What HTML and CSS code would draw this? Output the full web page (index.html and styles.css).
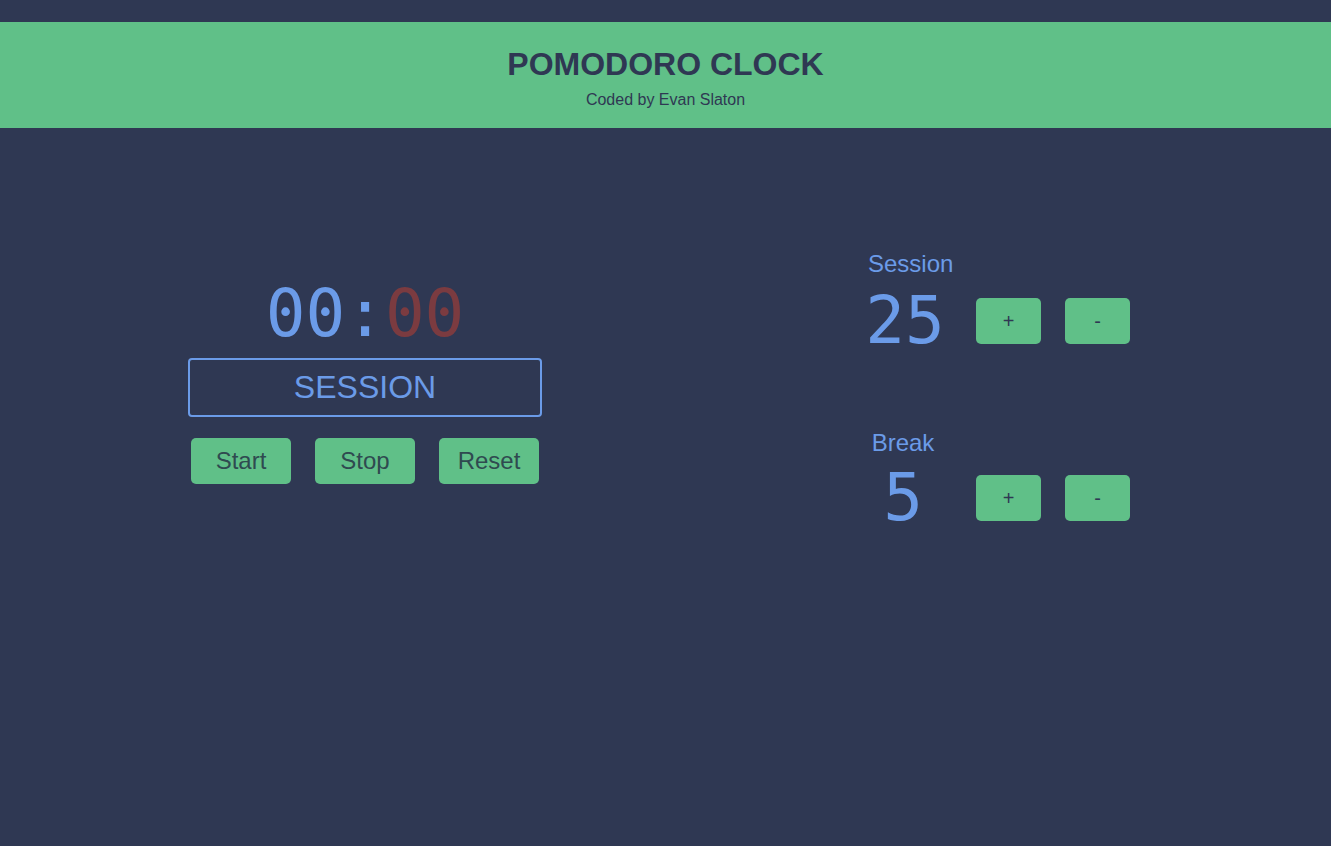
FILE: index.html
```html
<!DOCTYPE html>
<html lang="en">
<head>
<meta charset="utf-8">
<title>Pomodoro Clock</title>
<link rel="stylesheet" href="styles.css">
</head>
<body>
<header class="header">
  <h1 class="title">POMODORO CLOCK</h1>
  <p class="subtitle">Coded by Evan Slaton</p>
</header>
<main class="main">
  <section class="clock">
    <div class="time"><span class="mins">00</span>:<span class="secs">00</span></div>
    <div class="mode">SESSION</div>
    <div class="controls">
      <button class="btn">Start</button>
      <button class="btn">Stop</button>
      <button class="btn">Reset</button>
    </div>
  </section>
  <section class="settings">
    <div class="group">
      <div class="label label-session">Session</div>
      <div class="row">
        <div class="num">25</div>
        <button class="adj">+</button>
        <button class="adj">-</button>
      </div>
    </div>
    <div class="group group-break">
      <div class="label label-break">Break</div>
      <div class="row">
        <div class="num">5</div>
        <button class="adj">+</button>
        <button class="adj">-</button>
      </div>
    </div>
  </section>
</main>
</body>
</html>
```

FILE: styles.css
```css
html, body {
  margin: 0;
  padding: 0;
}
body {
  background: #2f3853;
  font-family: "Liberation Sans", Arial, sans-serif;
  color: #2f3853;
  min-height: 846px;
}
.header {
  margin-top: 22px;
  background: #60c088;
  padding: 24px 0 18px;
  text-align: center;
}
.title {
  margin: 0;
  font-size: 32px;
  line-height: 36px;
  font-weight: bold;
  color: #2f3853;
}
.subtitle {
  margin: 8px 0 0;
  font-size: 16px;
  line-height: 20px;
  color: #2f3853;
}
.main {
  display: flex;
  align-items: flex-start;
}
.clock {
  margin-left: 188px;
  margin-top: 151px;
  width: 354px;
  display: flex;
  flex-direction: column;
  align-items: stretch;
}
.time {
  font-family: "DejaVu Sans Mono", monospace;
  font-size: 66px;
  line-height: 70px;
  text-align: center;
  color: #6b9be8;
}
.secs {
  color: #7b3b40;
}
.mode {
  margin-top: 9px;
  height: 59px;
  box-sizing: border-box;
  border: 2px solid #6b9be8;
  border-radius: 4px;
  font-size: 32px;
  line-height: 55px;
  text-align: center;
  color: #6b9be8;
}
.controls {
  margin-top: 21px;
  display: flex;
  justify-content: center;
  gap: 24px;
}
.btn {
  width: 100px;
  height: 46px;
  border: none;
  border-radius: 5px;
  background: #60c088;
  color: #2f4a50;
  font-family: "Liberation Sans", Arial, sans-serif;
  font-size: 24px;
  padding: 0;
}
.settings {
  margin-left: 320px;
  margin-top: 122px;
  display: flex;
  flex-direction: column;
  gap: 83px;
}
.group {
  display: flex;
  flex-direction: column;
}
.label {
  width: 86px;
  box-sizing: border-box;
  text-align: center;
  font-size: 24px;
  line-height: 28px;
  color: #6b9be8;
}
.label-session {
  padding-left: 6px;
}
.label-break {
  padding-right: 4px;
}
.row {
  margin-top: 18px;
  display: flex;
  align-items: center;
}
.group-break .row {
  margin-top: 16px;
}
.num {
  width: 86px;
  text-align: center;
  font-family: "DejaVu Sans Mono", monospace;
  font-size: 66px;
  line-height: 50px;
  height: 50px;
  color: #6b9be8;
}
.group-break .num {
  padding-right: 4px;
  box-sizing: border-box;
}
.adj {
  width: 65px;
  height: 46px;
  border: none;
  border-radius: 5px;
  background: #60c088;
  color: #2f3853;
  font-family: "Liberation Sans", Arial, sans-serif;
  font-size: 20px;
  padding: 0;
  margin-left: 24px;
}
.num + .adj {
  margin-left: 28px;
}
```
